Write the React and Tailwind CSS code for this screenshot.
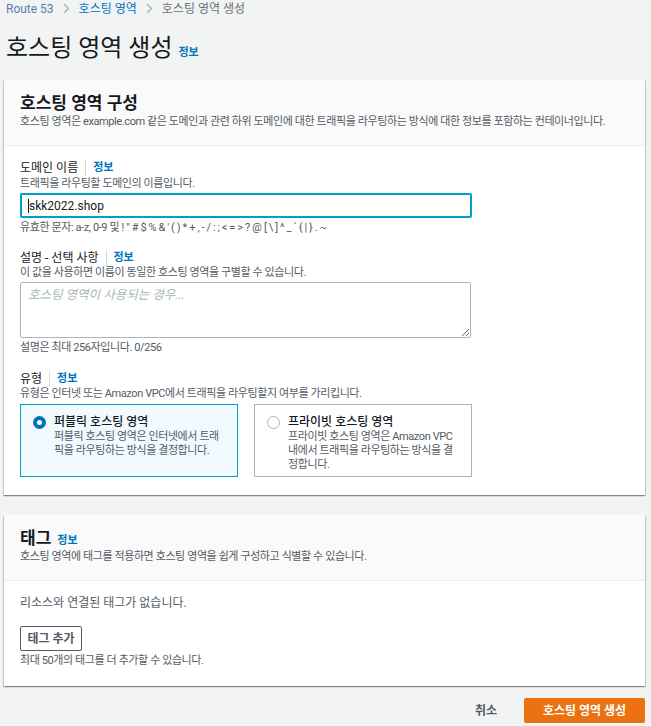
import React from 'react';

const font = { fontFamily: 'Roboto, "Noto Sans CJK KR", sans-serif' };

function InfoLink({ className = '' }) {
    return <span className={`text-[11px] font-bold text-[#0073bb] ${className}`}>정보</span>;
}

function FieldLabel({ children }) {
    return (
        <div className="flex items-center text-[12px] leading-[16px] text-[#16191f]">
            <span>{children}</span>
            <span className="mx-[7px] h-[16px] w-px bg-[#d5dbdb]"></span>
            <InfoLink />
        </div>
    );
}

function Panel({ title, desc, titleInfo, children }) {
    return (
        <div className="bg-white shadow-[0_1px_1px_0_rgba(0,28,36,0.3),1px_1px_1px_0_rgba(0,28,36,0.15),-1px_1px_1px_0_rgba(0,28,36,0.15)]">
            <div className="bg-[#fafafa] border-b border-[#eaeded] px-[16px] pt-[13px] pb-[16px]">
                <div className="flex items-baseline gap-[6px] h-[20px]">
                    <h2 className="text-[17px] leading-[20px] font-bold text-[#16191f]">{title}</h2>
                    {titleInfo && <InfoLink />}
                </div>
                <p className="text-[11px] leading-[14px] tracking-[-0.4px] text-[#545b64] mt-[2px]">{desc}</p>
            </div>
            {children}
        </div>
    );
}

function RadioCard({ checked, title, desc }) {
    return (
        <div className={`w-[218px] h-[73px] border pl-[12px] pr-[14px] pt-[9px] flex gap-[8px] ${checked ? 'border-[#00a1c9] bg-[#f1faff]' : 'border-[#aab7b8] bg-white'}`}>
            <div className="pt-[2px]">
                {checked ? (
                    <div className="w-[13px] h-[13px] rounded-full border-[4px] border-[#0073bb] bg-white"></div>
                ) : (
                    <div className="w-[13px] h-[13px] rounded-full border border-[#aab7b8] bg-white"></div>
                )}
            </div>
            <div className="flex-1">
                <div className="text-[12px] leading-[16px] text-[#16191f] font-medium">{title}</div>
                <div className="text-[11px] leading-[14px] tracking-[-0.4px] text-[#545b64]">{desc}</div>
            </div>
        </div>
    );
}

export default function App() {
    return (
        <div className="min-h-[726px] bg-[#f2f3f3] pl-[4px] pr-[6px]" style={font}>
            {/* Breadcrumb */}
            <div className="flex items-center h-[17px] text-[12px] pl-[2px]">
                <span className="text-[#5b7cb0]">Route 53</span>
                <svg className="mx-[9px]" width="7" height="11" viewBox="0 0 7 11"><path d="M1 1l4.5 4.5L1 10" stroke="#aab7b8" strokeWidth="1.5" fill="none" /></svg>
                <span className="text-[#0073bb]">호스팅 영역</span>
                <svg className="mx-[9px]" width="7" height="11" viewBox="0 0 7 11"><path d="M1 1l4.5 4.5L1 10" stroke="#aab7b8" strokeWidth="1.5" fill="none" /></svg>
                <span className="text-[#687078]">호스팅 영역 생성</span>
            </div>

            {/* Title */}
            <div className="flex items-baseline gap-[6px] mt-[15px] pl-[2px]">
                <h1 className="text-[24px] leading-[32px] text-[#16191f]">호스팅 영역 생성</h1>
                <InfoLink />
            </div>

            <div className="mt-[16px]">
                <Panel title="호스팅 영역 구성" desc="호스팅 영역은 example.com 같은 도메인과 관련 하위 도메인에 대한 트래픽을 라우팅하는 방식에 대한 정보를 포함하는 컨테이너입니다.">
                    <div className="px-[16px] pt-[14px] pb-[18px]">
                        {/* Domain name */}
                        <FieldLabel>도메인 이름</FieldLabel>
                        <p className="text-[11px] leading-[16px] tracking-[-0.4px] text-[#545b64]">트래픽을 라우팅할 도메인의 이름입니다.</p>
                        <div className="mt-[1px] w-[452px] h-[25px] border-2 border-[#00a1c9] rounded-[2px] flex items-center px-[6px] text-[12px] text-[#16191f]">
                            <span className="w-px h-[14px] bg-[#16191f]"></span>
                            <span>skk2022.shop</span>
                        </div>
                        <p className="text-[11px] leading-[14px] tracking-[-0.4px] text-[#545b64] mt-[3px]">유효한 문자: a-z, 0-9 및 ! " # $ % &amp; ' ( ) * + , - / : ; &lt; = &gt; ? @ [ \ ] ^ _ ` {'{'} | {'}'} . ~</p>

                        {/* Description */}
                        <div className="mt-[15px]">
                            <FieldLabel>설명 - 선택 사항</FieldLabel>
                        </div>
                        <p className="text-[11px] leading-[14px] tracking-[-0.4px] text-[#545b64]">이 값을 사용하면 이름이 동일한 호스팅 영역을 구별할 수 있습니다.</p>
                        <textarea
                            className="mt-[2px] block w-[451px] h-[56px] border border-[#aab7b8] rounded-[2px] px-[7px] py-[3px] text-[12.5px] italic placeholder:text-[#aab7b8] outline-none resize"
                            placeholder="호스팅 영역이 사용되는 경우..."
                        ></textarea>
                        <p className="text-[11px] leading-[16px] tracking-[-0.4px] text-[#545b64] mt-[2px]">설명은 최대 256자입니다. 0/256</p>

                        {/* Type */}
                        <div className="mt-[15px]">
                            <FieldLabel>유형</FieldLabel>
                        </div>
                        <p className="text-[11px] leading-[14px] tracking-[-0.4px] text-[#545b64]">유형은 인터넷 또는 Amazon VPC에서 트래픽을 라우팅할지 여부를 가리킵니다.</p>
                        <div className="flex gap-[16px] mt-[3px]">
                            <RadioCard checked title="퍼블릭 호스팅 영역" desc="퍼블릭 호스팅 영역은 인터넷에서 트래픽을 라우팅하는 방식을 결정합니다." />
                            <RadioCard title="프라이빗 호스팅 영역" desc="프라이빗 호스팅 영역은 Amazon VPC 내에서 트래픽을 라우팅하는 방식을 결정합니다." />
                        </div>
                    </div>
                </Panel>
            </div>

            <div className="mt-[20px]">
                <Panel title="태그" titleInfo desc="호스팅 영역에 태그를 적용하면 호스팅 영역을 쉽게 구성하고 식별할 수 있습니다.">
                    <div className="px-[16px] pt-[14px] pb-[18px]">
                        <p className="text-[12px] leading-[16px] text-[#545b64]">리소스와 연결된 태그가 없습니다.</p>
                        <button className="mt-[15px] w-[62px] h-[25px] border border-[#545b64] rounded-[2px] text-[12px] font-bold text-[#545b64] bg-white">태그 추가</button>
                        <p className="text-[11px] leading-[14px] tracking-[-0.4px] text-[#545b64] mt-[3px]">최대 50개의 태그를 더 추가할 수 있습니다.</p>
                    </div>
                </Panel>
            </div>

            {/* Footer */}
            <div className="flex justify-end items-center gap-[27px] mt-[12px] pb-[4px]">
                <span className="text-[12px] font-bold text-[#545b64]">취소</span>
                <button className="w-[121px] h-[25px] bg-[#ec7211] rounded-[2px] text-white text-[12px] font-bold">호스팅 영역 생성</button>
            </div>
        </div>
    );
}
